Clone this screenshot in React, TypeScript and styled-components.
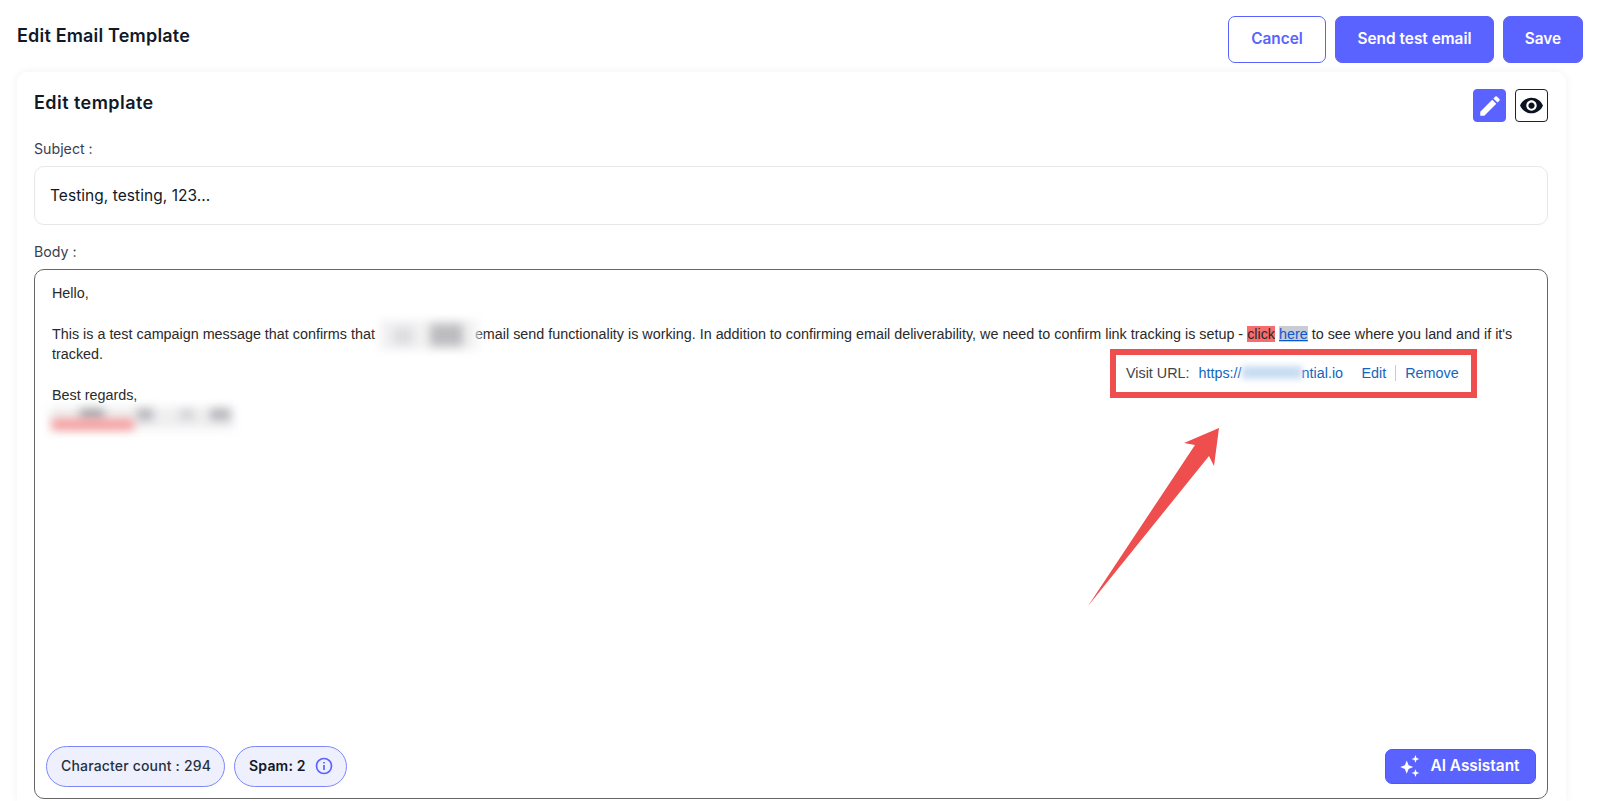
import React from "react";
import styled, { createGlobalStyle } from "styled-components";
import { MdEdit, MdVisibility } from "react-icons/md";

const Global = createGlobalStyle`
  html, body { margin: 0; padding: 0; background: #fff; height: 801px; overflow: hidden; }
  * { box-sizing: border-box; }
`;
const Page = styled.div`
  position: relative; width: 1600px; height: 801px; overflow: hidden;
  display: flex; flex-direction: column;
  font-family: Inter, "Liberation Sans", sans-serif; color: #111827;
`;
const Header = styled.header`
  display: flex; justify-content: space-between; align-items: flex-start;
  height: 72px; padding: 16px 17px 0;
`;
const PageTitle = styled.h1`
  margin: 9px 0 0; font-size: 18px; line-height: 22px; font-weight: 600; letter-spacing: 0.18px; color: #111827;
`;
const Actions = styled.div`display: flex; gap: 9px;`;
const ActionButton = styled.button<{ $outline?: boolean; $w: number }>`
  width: ${p => p.$w}px; height: 47px; border-radius: 7px; padding: 0 0 2px;
  border: 1px solid #5a63ff; font: 600 15.4px Inter, sans-serif;
  background: ${p => (p.$outline ? "#fff" : "#5a63ff")};
  color: ${p => (p.$outline ? "#5a63ff" : "#fff")};
`;
const Card = styled.section`
  flex: 1; margin: 0 34px 0 17px; padding: 0 18px 0 17px; border-radius: 10px 10px 0 0; background: #fff;
  box-shadow: 0 0 10px rgba(0,0,0,0.06); display: flex; flex-direction: column;
`;
const CardHead = styled.div`
  display: flex; justify-content: space-between; align-items: flex-start; padding-top: 17px; height: 68px;
`;
const CardTitle = styled.h2`
  margin: 2px 0 0; font-size: 18px; line-height: 24px; font-weight: 600; letter-spacing: 0.45px; color: #111827;
`;
const ToolRow = styled.div`display: flex; gap: 9px;`;
const ToolButton = styled.button<{ $active?: boolean }>`
  width: 33px; height: 33px; padding: 0; border-radius: 4px; display: flex; align-items: center; justify-content: center;
  border: 1px solid ${p => (p.$active ? "#5a63ff" : "#222")};
  background: ${p => (p.$active ? "#5a63ff" : "#fff")};
  color: ${p => (p.$active ? "#fff" : "#0b1220")};
`;
const Label = styled.div`
  font-size: 14.2px; line-height: 18px; color: #374151; height: 26px;
`;
const SubjectBox = styled.div`
  height: 59px; border: 1px solid #e5e7eb; border-radius: 10px; padding: 0 15px;
  display: flex; align-items: center; font-size: 15.5px; letter-spacing: 0.05px; color: #111827; margin-bottom: 18px;
`;
const BodyBox = styled.div`
  position: relative; height: 530px; border: 1px solid #666; border-radius: 10px;
  padding: 13px 17px; font: 14.35px/20.4px "Liberation Sans", Arial, sans-serif; color: #2a2a2a;
`;
const Para = styled.p`margin: 0 0 20.4px; width: 1470px;`;
const Gap = styled.span`display: inline-block; width: 96px;`;
const Click = styled.span`background: #f66d70;`;
const Here = styled.a`background: #c8ccd4; color: #0b57d0; text-decoration: underline;`;
const Smudge = styled.div<{ $l: number; $t: number; $w: number; $h: number; $c: string }>`
  position: absolute; left: ${p => p.$l}px; top: ${p => p.$t}px; width: ${p => p.$w}px; height: ${p => p.$h}px;
  background: ${p => p.$c}; filter: blur(5px);
`;
const LinkBubble = styled.div`
  position: absolute; left: 1075px; top: 79px; width: 367px; height: 49px;
  border: 6px solid #ef4e4e; background: #fff; display: flex; align-items: center; padding: 0 0 2px 10px;
  font: 14.35px "Liberation Sans", Arial, sans-serif; color: #444;
`;
const LinkText = styled.span`color: #1565c0;`;
const Url = styled(LinkText)`margin-left: 9px; width: 163px; display: flex; align-items: center;`;
const UrlBlur = styled.span`
  display: inline-block; width: 60px; height: 13px; background: #c9dcf2; filter: blur(3px);
`;
const Divider = styled.span`width: 1px; height: 16px; background: #ccc; margin: 0 9px;`;
const BottomRow = styled.div`
  position: absolute; left: 11px; right: 11px; bottom: 11px; display: flex; align-items: flex-end; gap: 9px;
`;
const Pill = styled.div`
  height: 41px; padding: 0 13px 2px 14px; border-radius: 21px; border: 1px solid #7c85ff; background: #eef0fd;
  display: flex; align-items: center; gap: 9px; font: 500 14px Inter, sans-serif; letter-spacing: 0.17px; color: #27303f;
`;
const SpamText = styled.span`font-weight: 600; color: #111827;`;
const AiButton = styled.button`
  margin-left: auto; margin-bottom: 3px; width: 151px; height: 35px; border: 1px solid #4f58f5; border-radius: 7px;
  background: #5a63ff; color: #fff; font: 600 15.4px Inter, sans-serif; display: flex; align-items: center; justify-content: center; gap: 8px; padding: 0 3px 2px 0;
`;
const Arrow = styled.svg`position: absolute; left: 0; top: 0; pointer-events: none;`;

const smudges = [
  { l: 345, t: 50, w: 98, h: 30, c: "#f2f2f3" },
  { l: 358, t: 58, w: 20, h: 16, c: "#dcdcdf" },
  { l: 395, t: 54, w: 33, h: 22, c: "#bcbcc0" },
  { l: 15, t: 137, w: 184, h: 22, c: "#efeff0" },
  { l: 45, t: 139, w: 24, h: 11, c: "#a5a5aa" },
  { l: 102, t: 139, w: 16, h: 11, c: "#b4b4b9" },
  { l: 145, t: 140, w: 14, h: 9, c: "#cfcfd2" },
  { l: 175, t: 139, w: 20, h: 11, c: "#b4b4b9" },
  { l: 17, t: 149, w: 82, h: 11, c: "#f79a9a" },
];

export default function App() {
  return (
    <Page>
      <Global />
      <Header>
        <PageTitle>Edit Email Template</PageTitle>
        <Actions>
          <ActionButton $outline $w={98}>Cancel</ActionButton>
          <ActionButton $w={159}>Send test email</ActionButton>
          <ActionButton $w={80}>Save</ActionButton>
        </Actions>
      </Header>
      <Card>
        <CardHead>
          <CardTitle>Edit template</CardTitle>
          <ToolRow>
            <ToolButton $active><MdEdit size={26} /></ToolButton>
            <ToolButton><MdVisibility size={25} /></ToolButton>
          </ToolRow>
        </CardHead>
        <Label>Subject :</Label>
        <SubjectBox>Testing, testing, 123...</SubjectBox>
        <Label>Body :</Label>
        <BodyBox>
          <Para>Hello,</Para>
          <Para>
            This is a test campaign message that confirms that <Gap />email send functionality is working. In addition to confirming email deliverability, we need to confirm link tracking is setup - <Click>click</Click> <Here>here</Here> to see where you land and if it's tracked.
          </Para>
          <Para>Best regards,</Para>
          {smudges.map(s => (
            <Smudge key={`${s.l}-${s.t}`} $l={s.l} $t={s.t} $w={s.w} $h={s.h} $c={s.c} />
          ))}
          <LinkBubble>
            Visit URL:
            <Url>https://<UrlBlur />ntial.io</Url>
            <LinkText>Edit</LinkText>
            <Divider />
            <LinkText>Remove</LinkText>
          </LinkBubble>
          <BottomRow>
            <Pill>Character count : 294</Pill>
            <Pill>
              <SpamText>Spam: 2</SpamText>
              <svg width="18" height="18" viewBox="0 0 18 18" fill="none" stroke="#5a63ff" strokeWidth="1.7">
                <circle cx="9" cy="9" r="7.5" />
                <path d="M9 8v5M9 5v1.4" />
              </svg>
            </Pill>
            <AiButton>
              <svg width="24" height="24" viewBox="0 0 22 22" fill="#fff">
                <path d="M8 6l1.7 4.3L14 12l-4.3 1.7L8 18l-1.7-4.3L2 12l4.3-1.7z" />
                <path d="M16 1l1 2.6 2.6 1-2.6 1L16 8l-1-2.4-2.6-1 2.6-1z" />
                <path d="M16 14l1 2.4 2.6 1-2.6 1L16 21l-1-2.6-2.6-1 2.6-1z" />
              </svg>
              AI Assistant
            </AiButton>
          </BottomRow>
        </BodyBox>
      </Card>
      <Arrow width="1600" height="801" viewBox="0 0 1600 801">
        <path d="M1219 428L1184 443L1195 445L1088 606L1209 456L1214 466Z" fill="#ef4e4e" />
      </Arrow>
    </Page>
  );
}
